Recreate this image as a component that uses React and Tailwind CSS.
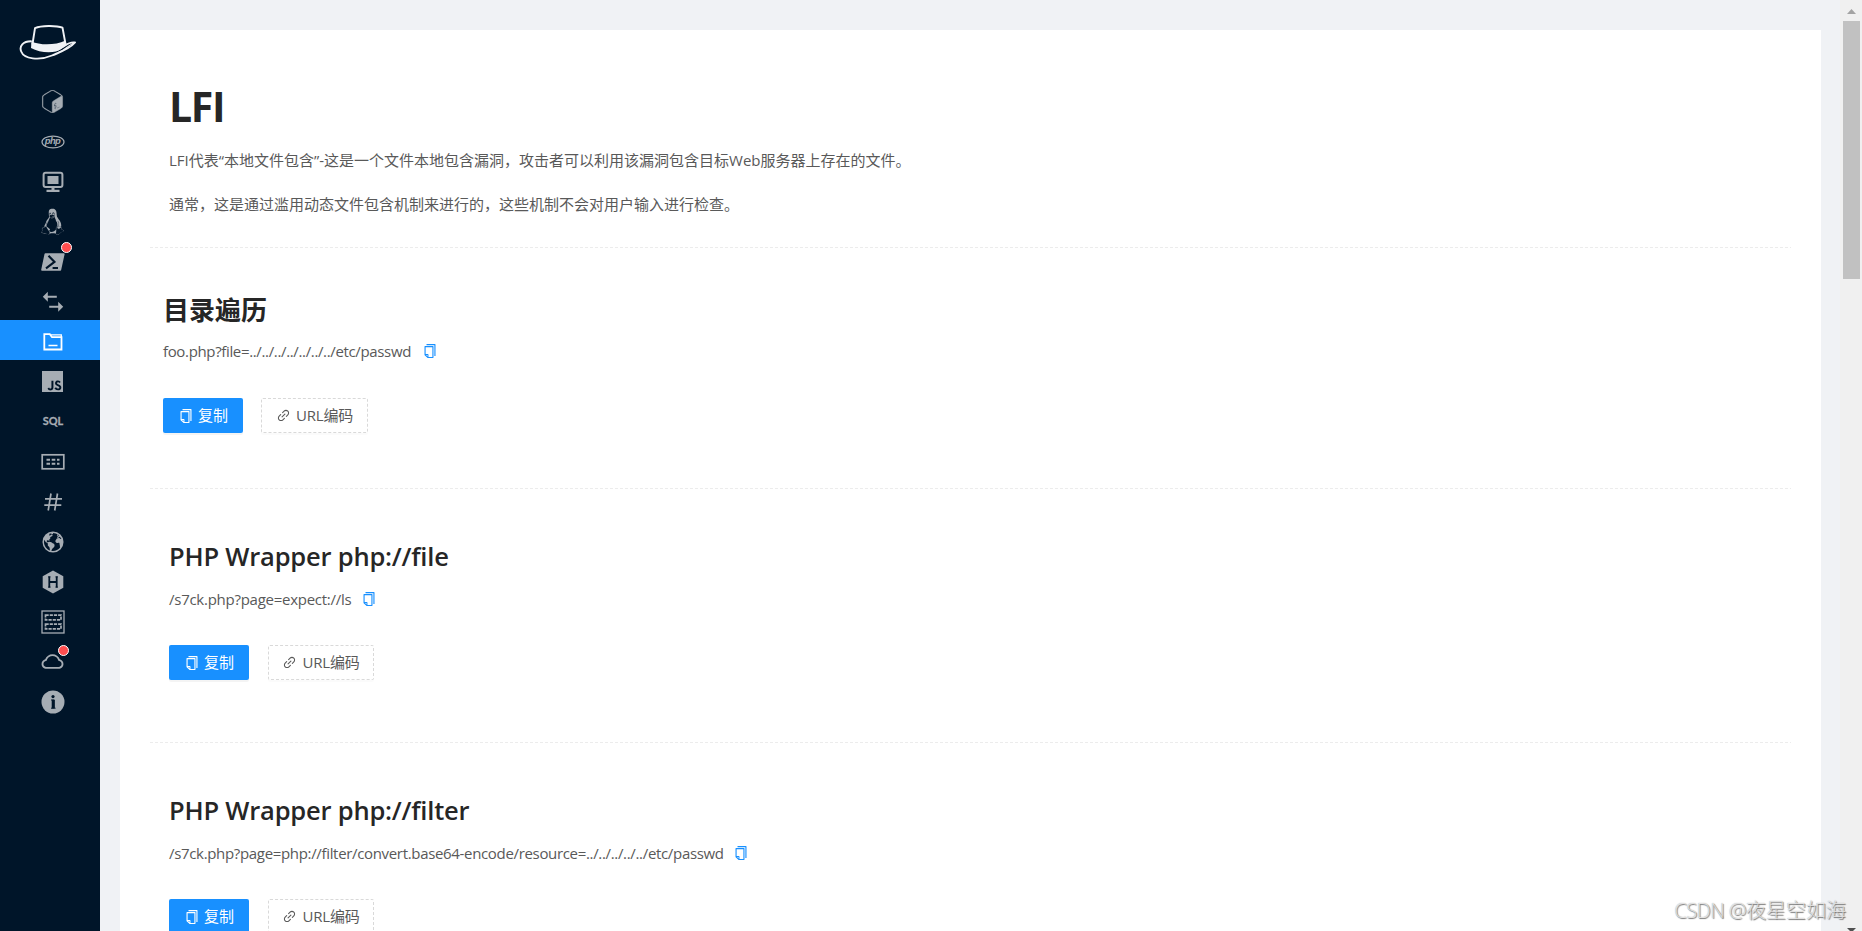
import React from "react";
import { AiOutlineCopy, AiOutlineLink, AiOutlineCloud } from "react-icons/ai";
import { SiGnubash, SiJavascript } from "react-icons/si";
import { DiLinux } from "react-icons/di";
import { IoEarth } from "react-icons/io5";

const Php = () => (
  <svg width="24" height="24" viewBox="0 0 24 24">
    <ellipse cx="12" cy="12" rx="11" ry="5.9" fill="none" stroke="currentColor" strokeWidth="1.2" />
    <text x="11.8" y="14.4" textAnchor="middle" fontSize="9.5" fontWeight="700" fontStyle="italic" fontFamily="Liberation Sans" fill="currentColor" textLength="16">php</text>
  </svg>
);

const Monitor = () => (
  <svg width="22" height="22" viewBox="0 0 22 22">
    <rect x="1.6" y="1.7" width="18.8" height="14.2" rx="2" fill="none" stroke="currentColor" strokeWidth="2" />
    <path fill="currentColor" d="M5.5 5h11v8h-11zM9.5 16.5h3v2.2h5v2.3h-13v-2.3h5z" />
  </svg>
);

const Powershell = () => (
  <svg width="24" height="24" viewBox="0 0 24 24">
    <path fill="currentColor" d="M4.4 3.2h18.4c.5 0 .9.4.8 1l-3.400 15.600c-.1.6-.6 1-1.200 1H1c-.6 0-.9-.4-.8-1L3.500 4.100c.1-.5.500-.9.900-.9z" />
    <path d="M7.500 5.700l6 6.200-8.500 6.400M11.600 18h5.400" fill="none" stroke="#001529" strokeWidth="2.100" />
  </svg>
);

const Arrows = () => (
  <svg width="22" height="22" viewBox="0 0 22 22" fill="currentColor">
    <path d="M.8 5.800l5-5v4h9v2h-9v4zM21.200 15.800l-5-5v4h-9v2h9v4z" />
  </svg>
);

const Folder = () => (
  <svg width="22" height="22" viewBox="0 0 22 22" fill="none" stroke="currentColor">
    <path d="M2.300 4.200h5.500l2.200 3h9.500v12.300H2.300z" strokeWidth="1.800" />
    <path d="M9 4.800h10.300v2.500M6.500 15.500h9" strokeWidth="1.300" />
  </svg>
);

const Sql = () => (
  <svg width="24" height="24" viewBox="0 0 24 24">
    <text x="12" y="15" textAnchor="middle" fontSize="12" fontWeight="700" fontFamily="Lato, sans-serif" fill="currentColor" stroke="currentColor" strokeWidth="0.300" textLength="20.500" lengthAdjust="spacingAndGlyphs">SQL</text>
  </svg>
);

const Field = () => (
  <svg width="24" height="24" viewBox="0 0 24 24" fill="currentColor">
    <rect x="1.200" y="4.800" width="21.600" height="14" fill="none" stroke="currentColor" strokeWidth="1.700" />
    <path d="M5.500 8.700h3.500v2h-3.500zM10.700 8.700h3.600v2h-3.600zM16 8.700h2.500v2H16zM5.500 12.700h3.500v2h-3.500zM10.700 12.700h3.600v2h-3.600zM16 12.700h2.500v2H16z" />
  </svg>
);

const Hash = () => (
  <svg width="22" height="22" viewBox="0 0 22 22" fill="none" stroke="currentColor" strokeWidth="1.700">
    <path d="M9 2.500L6.200 19.500M15.500 2.500L12.700 19.500M3 7.900h17M2.300 14.100h17" />
  </svg>
);

const HexH = () => (
  <svg width="24" height="24" viewBox="0 0 24 24">
    <path fill="currentColor" d="M12 .4l10.300 5.800v11.600L12 23.600 1.700 17.800V6.200z" />
    <path d="M8.300 6.500v11M15.700 6.500v11M8.300 12h7.400" stroke="#001529" strokeWidth="1.800" fill="none" />
    <path d="M7.100 6.900h2.400M14.500 6.900h2.400M7.100 17.100h2.400M14.500 17.100h2.400" stroke="#001529" strokeWidth="1" />
  </svg>
);

const Rows = () => (
  <svg width="24" height="24" viewBox="0 0 24 24" fill="none" stroke="currentColor">
    <rect x="1" y="1" width="22" height="22" strokeWidth="1.300" />
    <rect x="4.500" y="5.200" width="15.500" height="4.600" strokeWidth="1.700" strokeDasharray="3.200 1" />
    <rect x="4.500" y="14.200" width="15.500" height="4.600" strokeWidth="1.700" strokeDasharray="3.200 1" />
  </svg>
);

const Info = () => (
  <svg width="24" height="24" viewBox="0 0 24 24">
    <circle cx="12" cy="12" r="11.500" fill="currentColor" />
    <circle cx="12" cy="6.600" r="1.600" fill="#001529" />
    <path d="M10 10h3.300v8M10 18.200h4.600" fill="none" stroke="#001529" strokeWidth="0.900" />
    <path d="M10.700 9.700h2.800v8.800h-2.800z" fill="#001529" />
  </svg>
);

const Hat = () => (
  <svg width="58" height="38" viewBox="0 0 58 38" fill="none" stroke="#f0f2f5" strokeLinecap="round" strokeLinejoin="round">
    <path d="M13.500 20L16 4.200C22 1.500 37 1.300 43.500 3.700L46.500 20" strokeWidth="1.900" />
    <path fill="#f0f2f5" stroke="none" d="M12.500 17.500C21 21.500 37 21.200 46 16.800L47.500 21.500C43 23.500 41 26.500 37 27.500C29 29 19 28 12 24z" />
    <path d="M12 17.300C4 17.300 0 22 2.200 27.500C5 35 20 37 33 31.500C41 28 50 25.500 56 18.500C49 17.200 46 22.500 39 25.500" strokeWidth="1.900" />
    <path d="M40 28C46 26.500 49 21.500 54 19.500" strokeWidth="1.200" />
  </svg>
);

const items = [
  { icon: <SiGnubash size={23} stroke="currentColor" strokeWidth="0.5" /> },
  { icon: <Php /> },
  { icon: <Monitor /> },
  { icon: <DiLinux size={27} /> },
  { icon: <Powershell />, dot: "top-[2px] left-[61px]" },
  { icon: <Arrows /> },
  { icon: <Folder />, active: true },
  { icon: <SiJavascript size={21} /> },
  { icon: <Sql /> },
  { icon: <Field /> },
  { icon: <Hash /> },
  { icon: <IoEarth size={24} /> },
  { icon: <HexH /> },
  { icon: <Rows /> },
  { icon: <AiOutlineCloud size={25} />, dot: "top-[5px] left-[58px]" },
  { icon: <Info /> },
];

const Sidebar = () => (
  <nav className="flex h-full w-[100px] shrink-0 flex-col bg-[#001529]">
    <div className="flex h-20 items-start pt-6 pl-[19px]">
      <Hat />
    </div>
    {items.map((it, i) => (
      <div
        key={i}
        className={
          it.active
            ? "relative flex h-10 items-center justify-center bg-[#1890ff] pt-px pl-[5px] text-white"
            : "relative flex h-10 items-center justify-center pt-[3px] pl-[5px] text-[#a6adb4]"
        }
      >
        {it.icon}
        {it.dot && (
          <span className={`absolute size-[11px] rounded-full border border-white bg-[#ff4d4f] ${it.dot}`} />
        )}
      </div>
    ))}
  </nav>
);

const Buttons = ({ gap, urlWidth }) => (
  <div className={`flex text-[15px] ${gap}`}>
    <button className="flex h-[35px] w-20 items-center justify-center gap-1 rounded-[2px] bg-[#1890ff] text-white shadow-[0_2px_0_rgba(0,0,0,0.045)]">
      <AiOutlineCopy size={16} />
      <span>复制</span>
    </button>
    <button className={`flex h-[35px] items-center justify-center gap-[5px] rounded-[2px] border border-dashed border-[#d9d9d9] bg-white text-[#595959] shadow-[0_2px_0_rgba(0,0,0,0.016)] ${urlWidth}`}>
      <AiOutlineLink size={15} />
      <span className="tracking-[-0.2px]">URL编码</span>
    </button>
  </div>
);

const Code = ({ children, box }) => (
  <div className="flex h-6 items-center gap-[10px] text-[15px] leading-6 whitespace-nowrap text-[#595959]">
    <span className={`mb-[2px] ${box}`}>{children}</span>
    <AiOutlineCopy size={16} className="mb-[2px] text-[#1890ff]" />
  </div>
);

const Divider = () => (
  <svg className="block h-px w-[1641px]" height="1">
    <line x1="0" y1="0.5" x2="100%" y2="0.5" stroke="#ececec" strokeDasharray="3 2" />
  </svg>
);

const Wrapper = ({ title, code, box }) => (
  <section className="pl-[19px]">
    <h2 className="mt-[51px] mb-4 h-8 text-[25.500px] leading-8 font-semibold tracking-[-0.2px] whitespace-nowrap text-[#262626]">{title}</h2>
    <Code box={box}>{code}</Code>
    <div className="h-[33px]" />
    <Buttons gap="gap-[19px]" urlWidth="w-[106px]" />
    <div className="h-[62px]" />
  </section>
);

export default function App() {
  return (
    <div className="flex h-[931px] w-[1862px] overflow-hidden bg-[#f0f2f5] font-['Open_Sans','Noto_Sans_CJK_SC',sans-serif]">
      <Sidebar />
      <main className="min-w-0 flex-1 overflow-hidden pt-[30px] pr-[19px] pl-5">
        <div className="h-[1200px] bg-white px-[30px] pt-14">
          <header className="pl-[19px] text-[15px] text-[#595959]">
            <h1 className="h-10 text-[41px] leading-10 font-bold tracking-[-1.3px] text-[#262626]">LFI</h1>
            <p className="mt-[22px] h-6 leading-6 whitespace-nowrap">LFI代表“本地文件包含”-这是一个文件本地包含漏洞，攻击者可以利用该漏洞包含目标Web服务器上存在的文件。</p>
            <p className="mt-5 mb-[31px] h-6 leading-6 whitespace-nowrap">通常，这是通过滥用动态文件包含机制来进行的，这些机制不会对用户输入进行检查。</p>
          </header>
          <Divider />
          <section className="pt-[46px] pb-[55px] pl-[13px]">
            <h2 className="mb-[14px] h-8 text-[26px] leading-8 font-bold text-[#262626]">目录遍历</h2>
            <Code box="w-[249px] tracking-[-0.350px]">foo.php?file=../../../../../../../etc/passwd</Code>
            <div className="h-[34px]" />
            <Buttons gap="gap-[18px]" urlWidth="w-[107px]" />
          </section>
          <Divider />
          <Wrapper title="PHP Wrapper php://file" code="/s7ck.php?page=expect://ls" box="w-[182px] tracking-[-0.260px]" />
          <Divider />
          <Wrapper title="PHP Wrapper php://filter" code="/s7ck.php?page=php://filter/convert.base64-encode/resource=../../../../../etc/passwd" box="w-[554px] tracking-[-0.330px]" />
        </div>
      </main>
      <div className="relative flex w-[22px] shrink-0 flex-col bg-[#f0f0f0] pl-[3px]">
        <svg className="mt-[9px] ml-1" width="9" height="5">
          <path d="M4.500 0L9 5H0z" fill="#a3a3a3" />
        </svg>
        <div className="mt-[7px] h-[258px] w-[17px] bg-[#c1c1c1]" />
        <svg className="mt-auto mb-0 ml-1" width="9" height="3">
          <path d="M0 0h9L6 3H3z" fill="#505050" />
        </svg>
        <div className="absolute right-4 bottom-[5px] text-[20px] leading-[30px] font-light whitespace-nowrap text-[#ffffffb0] [text-shadow:1px_1px_1px_#777,0_0_1px_#999]">
          <span className="tracking-[-0.5px]">CSDN @</span>夜星空如海
        </div>
      </div>
    </div>
  );
}
